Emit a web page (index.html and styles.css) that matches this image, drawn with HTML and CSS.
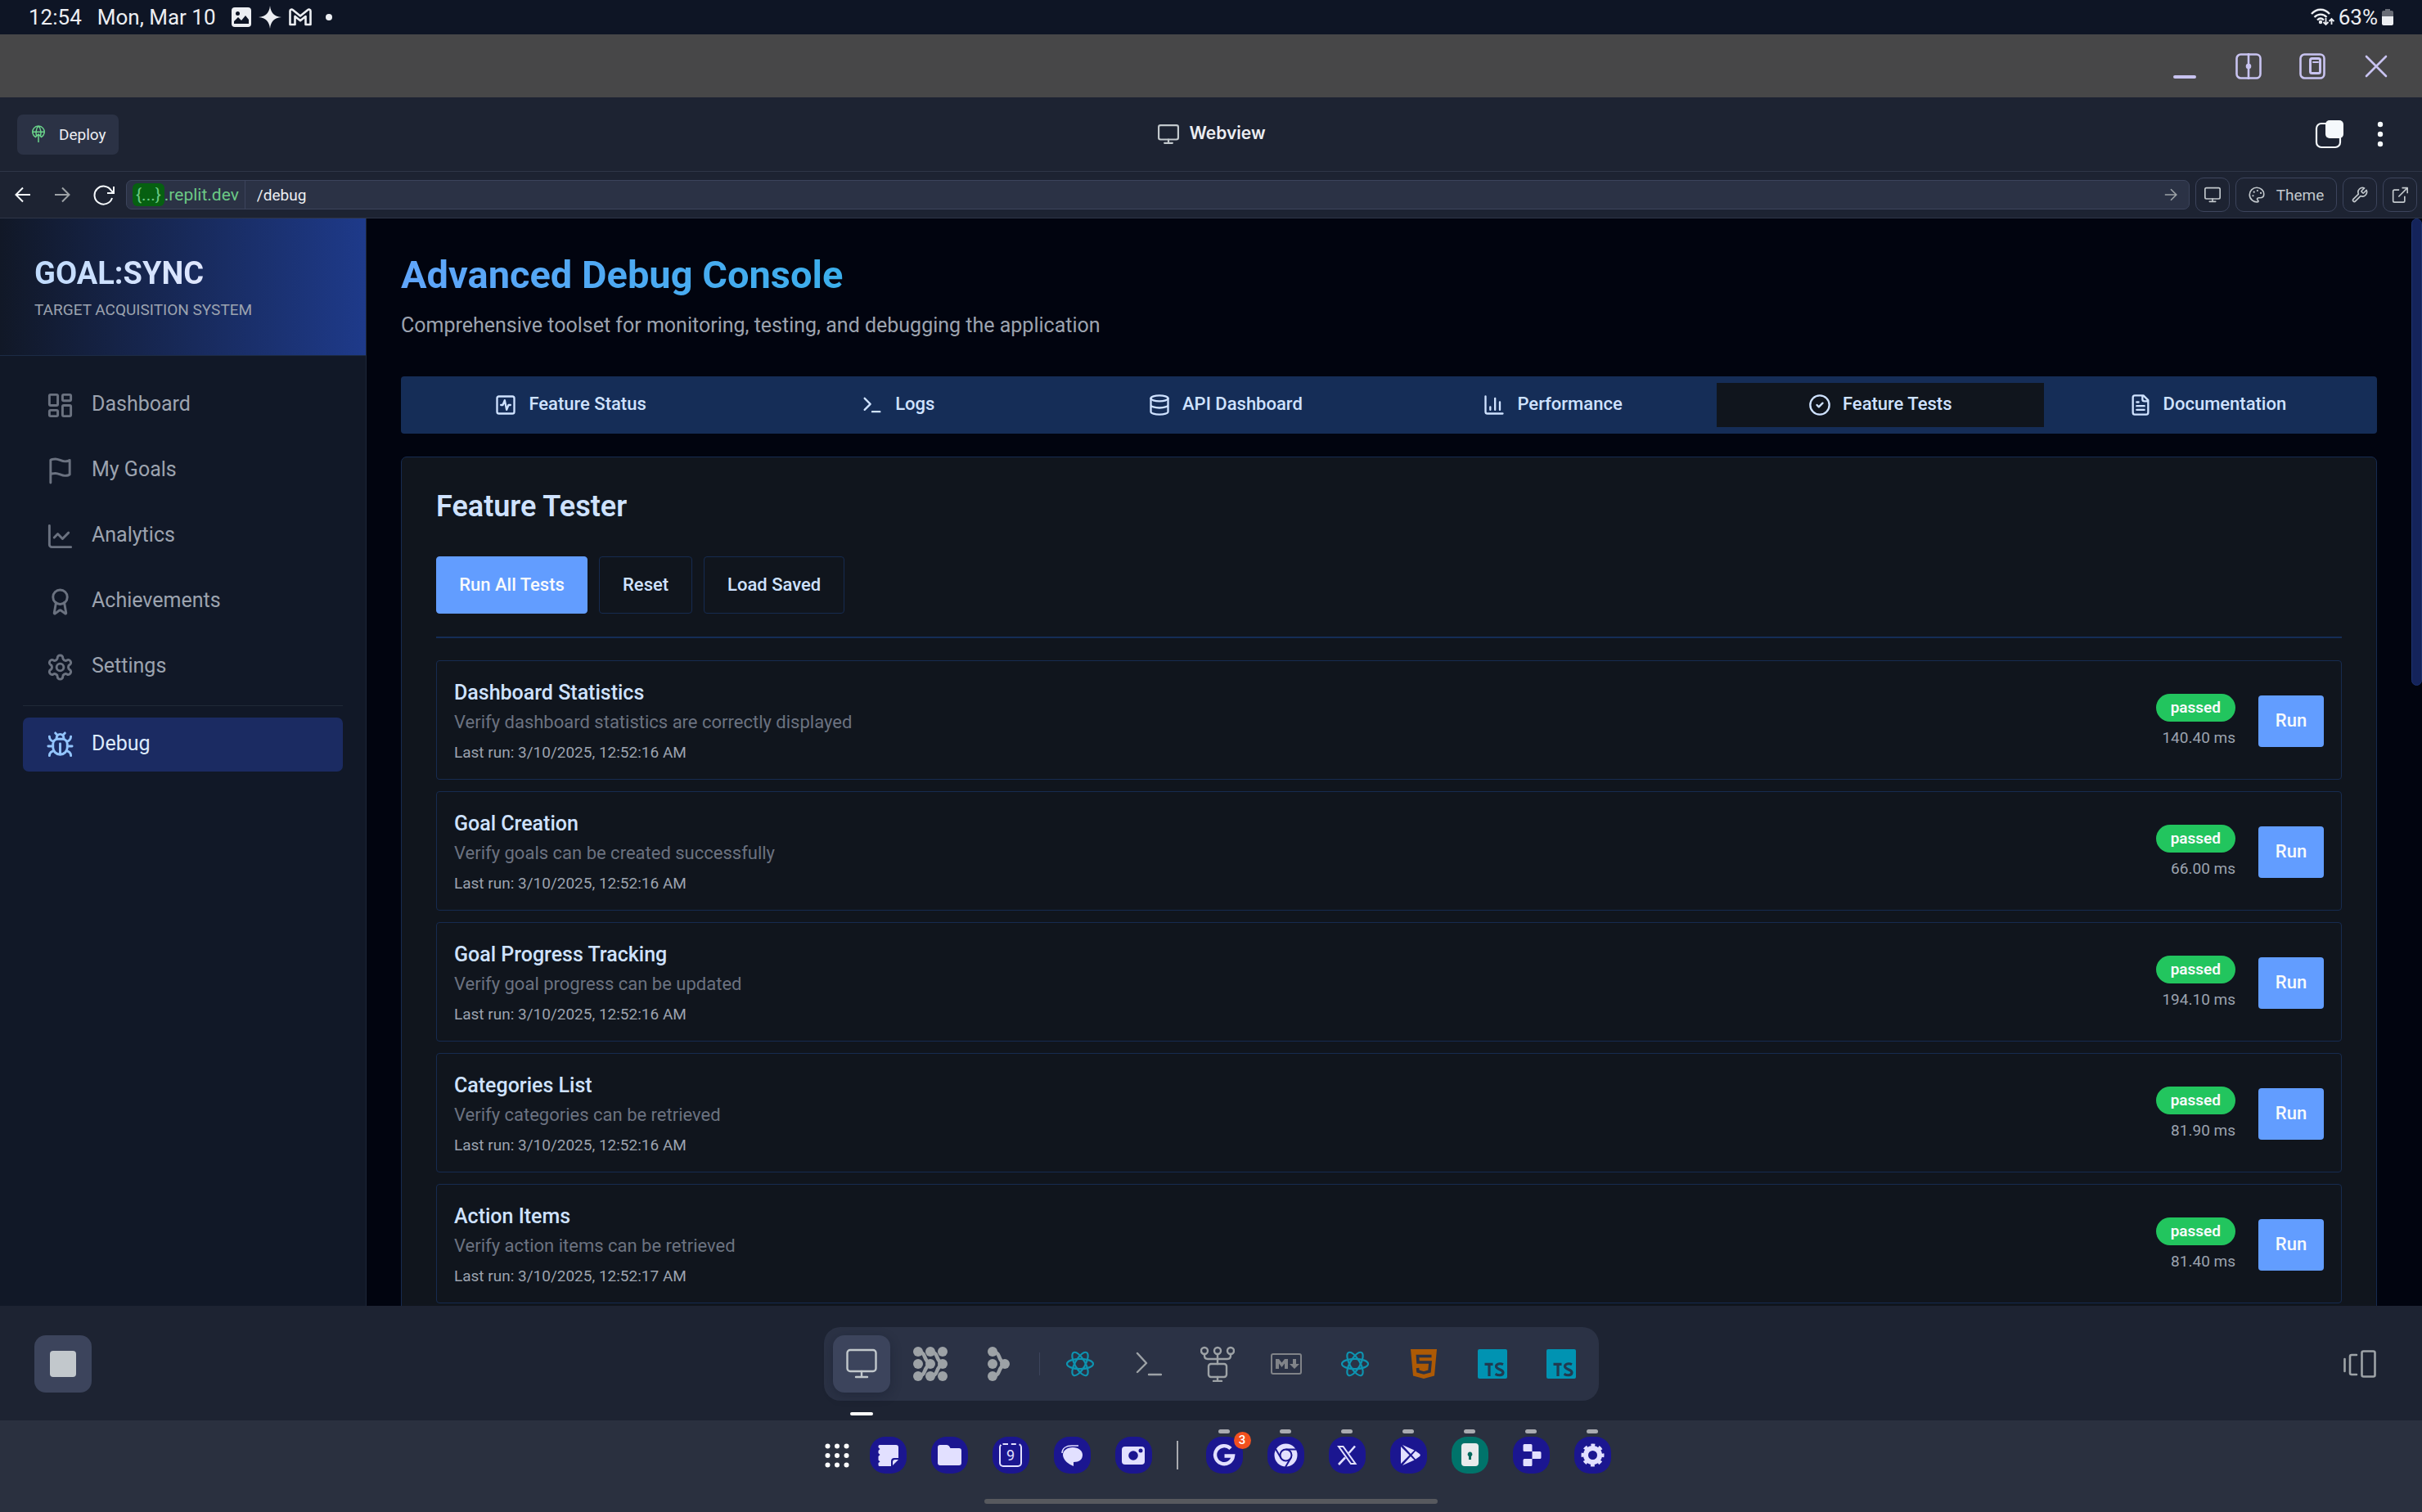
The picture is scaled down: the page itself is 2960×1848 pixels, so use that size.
FILE: index.html
```html
<!DOCTYPE html>
<html lang="en">
<head>
<meta charset="utf-8">
<title>Goal:Sync – Advanced Debug Console</title>
<link rel="stylesheet" href="styles.css">
</head>
<body>
<svg class="defs" aria-hidden="true">
  <symbol id="monitor" viewBox="0 0 24 24"><rect x="1" y="2" width="22" height="16" rx="2"/><path d="M12 18v4M7.500 22h9"/></symbol>
  <symbol id="react" viewBox="0 0 36 36"><ellipse cx="18" cy="18" rx="16" ry="6.200"/><ellipse cx="18" cy="18" rx="16" ry="6.200" transform="rotate(60 18 18)"/><ellipse cx="18" cy="18" rx="16" ry="6.200" transform="rotate(120 18 18)"/></symbol>
  <symbol id="ts" viewBox="0 0 36 36"><rect width="36" height="36" rx="2" fill="#0093b2"/><path d="M8.500 18.300h10M14 18.300V33" fill="none" stroke="#213a50" stroke-width="3.200"/><path d="M31 18.600c-3.500-1.600-8.500-1-8.500 2.500 0 4 8.500 3.200 8.500 7.400 0 3.800-5.500 4-9.500 1.800" fill="none" stroke="#213a50" stroke-width="3.200"/></symbol>
</svg>

<header class="status">
  <span>12:54</span>
  <span>Mon, Mar 10</span>
  <div class="status-icons">
    <svg width="24" height="24" viewBox="0 0 24 24"><rect y="0" width="24" height="24" rx="4" fill="#eceef2"/><circle cx="7.500" cy="7.500" r="2.500" fill="#0e1525"/><path d="M3 20v-3l5-5 4 4 5-6 4 5v5z" fill="#0e1525"/></svg>
    <svg width="28" height="28" viewBox="0 0 28 28"><path d="M14 0c1 9 5 13 14 14-9 1-13 5-14 14-1-9-5-13-14-14C9 13 13 9 14 0z" fill="#eceef2"/></svg>
    <svg width="28" height="22" viewBox="0 0 28 22"><path d="M1.500 20V3.500c0-2 2-2.500 3.500-1.300l9 7.300 9-7.300c1.500-1.200 3.500-.7 3.500 1.300V20h-6V10l-6.500 5.200L7.500 10v10z" fill="none" stroke="#eceef2" stroke-width="2.600" stroke-linejoin="round"/></svg>
    <svg width="8" height="8" viewBox="0 0 8 8"><circle cx="4" cy="4" r="4" fill="#eceef2"/></svg>
  </div>
  <div class="status-right">
    <svg width="29" height="22" viewBox="0 0 29 22" fill="none" stroke="#eceef2" stroke-width="2.400"><path d="M1 7c6-7 16-7 22 0M4.500 11c4.500-4.500 11-4.500 15 0M8 14.500c2.500-2.500 5.500-2.500 8 0"/><circle cx="12" cy="17" r="1"/><path d="M18.500 12v8m-3-3 3 3 3-3M25.500 20v-7m-3 3 3-3 3 3" stroke-width="1.800"/></svg>
    <span>63%</span>
    <svg width="14" height="20" viewBox="0 0 14 20"><path d="M4 0h6v2h2q2 0 2 2v5H0V4q0-2 2-2h2z" fill="#686c76"/><path d="M0 9h14v9q0 2-2 2H2q-2 0-2-2z" fill="#eceef2"/></svg>
  </div>
</header>

<div class="window-bar">
  <button aria-label="Minimize"><svg width="32" height="32" viewBox="0 0 32 32"><path d="M4 29h24" stroke-width="4"/></svg></button>
  <button aria-label="Split view"><svg width="32" height="32" viewBox="0 0 32 32"><rect x="1.500" y="1.500" width="29" height="29" rx="5"/><path d="M16 1v30"/><circle cx="16" cy="16" r="2" fill="#c8c3f0"/></svg></button>
  <button aria-label="Pop-up view"><svg width="32" height="32" viewBox="0 0 32 32"><rect x="1.500" y="1.500" width="29" height="29" rx="5"/><rect x="13.500" y="6.500" width="12" height="18" rx="2" stroke-width="3"/><path d="M17 11h6" stroke-width="2"/></svg></button>
  <button aria-label="Close"><svg width="32" height="32" viewBox="0 0 32 32"><path d="m4 4 24 24M28 4 4 28"/></svg></button>
</div>

<header class="app-bar">
  <div class="side"><button class="deploy"><svg width="16" height="22" viewBox="0 0 16 22"><path d="M4.500 14.500A7.200 7.200 0 1 1 11.500 14.500M1 8.200h14M8 1C4.500 4 4.500 11 6 14M8 1c3.500 3 3.500 10 2 13M8 21V11.500M4 15l4-4 4 4"/></svg>Deploy</button></div>
  <div class="view-title"><svg class="line" width="26" height="26"><use href="#monitor"/></svg><span>Webview</span></div>
  <div class="side end">
    <button aria-label="Tabs"><svg width="36" height="36" viewBox="0 0 36 36"><path d="M14 5H8a6 6 0 0 0-6 6v17a6 6 0 0 0 6 6h17a6 6 0 0 0 6-6V20" fill="none" stroke="#f5f9fc" stroke-width="2.200"/><rect x="13" y="1" width="22" height="22" rx="5" fill="#f5f9fc"/></svg></button>
    <button aria-label="More"><svg width="8" height="32" viewBox="0 0 8 32" fill="#f5f9fc"><circle cx="4" cy="4" r="3.200"/><circle cx="4" cy="16" r="3.200"/><circle cx="4" cy="28" r="3.200"/></svg></button>
  </div>
</header>

<nav class="url-bar">
  <button class="nav-btn" aria-label="Back"><svg width="20" height="20" viewBox="0 0 20 20"><path d="M19 10H1.500M10 1.500 1.500 10l8.500 8.500"/></svg></button>
  <button class="nav-btn dim" aria-label="Forward"><svg width="20" height="20" viewBox="0 0 20 20"><path d="M1 10h17.500M10 1.500l8.500 8.500-8.500 8.500"/></svg></button>
  <button class="nav-btn" aria-label="Reload"><svg width="26" height="26" viewBox="0 0 26 26"><path d="M23 17a11 11 0 1 1-1-9l3 3M25 3v8h-8"/></svg></button>
  <div class="address">
    <span class="host"><span class="tag">{...}</span>.replit.dev</span>
    <input aria-label="Path" value="/debug">
    <button class="dim" aria-label="Go"><svg width="16" height="16" viewBox="0 0 20 20"><path d="M1 10h17.500M10 1.500l8.500 8.500-8.500 8.500"/></svg></button>
  </div>
  <button class="tool" aria-label="Device"><svg class="line" width="20" height="20"><use href="#monitor"/></svg></button>
  <button class="tool wide"><svg width="20" height="20" viewBox="0 0 24 24"><path d="M14 22.500C8 23.500 1.500 19 1.500 12A10.500 10.500 0 0 1 12 1.500c6 0 10.500 4.500 10.500 9.500 0 4-3 5.500-5.500 5.500h-2c-2.500 0-3 2-1.500 3.500 1 1 1 2.300.5 2.500z"/><path d="M8 8h.1M13 6h.1M18 9.500h.1M6.500 13.500h.1" stroke-width="2.600" stroke-linecap="round"/></svg>Theme</button>
  <button class="tool" aria-label="Developer tools"><svg width="20" height="20" viewBox="0 0 24 24"><path d="M14.700 6.300a1 1 0 0 0 0 1.400l1.600 1.600a1 1 0 0 0 1.400 0l4-4a6.500 6.500 0 0 1-8.600 8.600l-7.600 7.600a2.100 2.100 0 0 1-3-3l7.600-7.600a6.500 6.500 0 0 1 8.600-8.600z"/></svg></button>
  <button class="tool" aria-label="Open in new tab"><svg width="20" height="20" viewBox="0 0 24 24"><path d="M11 5H4a2 2 0 0 0-2 2v14a2 2 0 0 0 2 2h13a2 2 0 0 0 2-2v-7M10 15 23 2M15 2h8v8"/></svg></button>
</nav>

<div class="page">
  <aside class="sidebar">
    <div class="brand">
      <h2>GOAL:SYNC</h2>
      <p>TARGET ACQUISITION SYSTEM</p>
    </div>
    <nav class="menu">
      <a href="#dashboard"><svg viewBox="0 0 24 24"><rect x="3" y="3" width="7" height="9" rx="1"/><rect x="14" y="3" width="7" height="5" rx="1"/><rect x="14" y="12" width="7" height="9" rx="1"/><rect x="3" y="16" width="7" height="5" rx="1"/></svg><span>Dashboard</span></a>
      <a href="#goals"><svg viewBox="0 0 24 24"><path d="M4 15s1-1 4-1 5 2 8 2 4-1 4-1V3s-1 1-4 1-5-2-8-2-4 1-4 1zM4 22v-7"/></svg><span>My Goals</span></a>
      <a href="#analytics"><svg viewBox="0 0 24 24"><path d="M3 3v16a2 2 0 0 0 2 2h16"/><path d="m19 9-5 5-4-4-3 3"/></svg><span>Analytics</span></a>
      <a href="#achievements"><svg viewBox="0 0 24 24"><path d="m15.477 12.890 1.515 8.526a.5.5 0 0 1-.81.47l-3.580-2.687a1 1 0 0 0-1.197 0l-3.586 2.686a.5.5 0 0 1-.81-.469l1.514-8.526"/><circle cx="12" cy="8" r="6"/></svg><span>Achievements</span></a>
      <a href="#settings"><svg viewBox="0 0 24 24"><path d="M12.220 2h-.44a2 2 0 0 0-2 2v.18a2 2 0 0 1-1 1.730l-.43.25a2 2 0 0 1-2 0l-.15-.08a2 2 0 0 0-2.730.73l-.22.38a2 2 0 0 0 .73 2.730l.15.1a2 2 0 0 1 1 1.720v.51a2 2 0 0 1-1 1.740l-.15.090a2 2 0 0 0-.73 2.730l.22.38a2 2 0 0 0 2.730.73l.15-.08a2 2 0 0 1 2 0l.43.25a2 2 0 0 1 1 1.730V20a2 2 0 0 0 2 2h.44a2 2 0 0 0 2-2v-.18a2 2 0 0 1 1-1.730l.43-.25a2 2 0 0 1 2 0l.15.08a2 2 0 0 0 2.730-.73l.22-.39a2 2 0 0 0-.73-2.730l-.15-.08a2 2 0 0 1-1-1.740v-.5a2 2 0 0 1 1-1.740l.15-.09a2 2 0 0 0 .73-2.730l-.22-.38a2 2 0 0 0-2.730-.73l-.15.080a2 2 0 0 1-2 0l-.43-.25a2 2 0 0 1-1-1.730V4a2 2 0 0 0-2-2z"/><circle cx="12" cy="12" r="3"/></svg><span>Settings</span></a>
      <hr>
      <a class="active" href="#debug"><svg viewBox="0 0 24 24"><path d="m8 2 1.880 1.880M14.120 3.880 16 2M9 7.130v-1a3.003 3.003 0 1 1 6 0v1M12 20c-3.300 0-6-2.700-6-6v-3a4 4 0 0 1 4-4h4a4 4 0 0 1 4 4v3c0 3.300-2.700 6-6 6M12 20v-9M6.530 9C4.600 8.800 3 7.100 3 5M6 13H2M3 21c0-2.100 1.700-3.900 3.800-4M20.970 5c0 2.100-1.600 3.800-3.500 4M22 13h-4M17.200 17c2.100.1 3.800 1.900 3.800 4"/></svg><span>Debug</span></a>
    </nav>
  </aside>

  <main>
    <h1>Advanced Debug Console</h1>
    <p class="lead">Comprehensive toolset for monitoring, testing, and debugging the application</p>
    <div class="tabs" role="tablist">
      <button role="tab"><svg viewBox="0 0 24 24"><rect x="3" y="3" width="18" height="18" rx="2"/><path d="M17 12h-2l-2 5-2-10-2 5H7"/></svg><span>Feature Status</span></button>
      <button role="tab"><svg viewBox="0 0 24 24"><path d="m4 17 6-6-6-6M12 19h8"/></svg><span>Logs</span></button>
      <button role="tab"><svg viewBox="0 0 24 24"><ellipse cx="12" cy="5" rx="9" ry="3"/><path d="M3 5v14a9 3 0 0 0 18 0V5M3 12a9 3 0 0 0 18 0"/></svg><span>API Dashboard</span></button>
      <button role="tab"><svg viewBox="0 0 24 24"><path d="M3 3v16a2 2 0 0 0 2 2h16M18 17V9M13 17V5M8 17v-3"/></svg><span>Performance</span></button>
      <button role="tab" class="selected" aria-selected="true"><svg viewBox="0 0 24 24"><circle cx="12" cy="12" r="10"/><path d="m9 12 2 2 4-4"/></svg><span>Feature Tests</span></button>
      <button role="tab"><svg viewBox="0 0 24 24"><path d="M15 2H6a2 2 0 0 0-2 2v16a2 2 0 0 0 2 2h12a2 2 0 0 0 2-2V7zM14 2v4a2 2 0 0 0 2 2h4M10 9H8M16 13H8M16 17H8"/></svg><span>Documentation</span></button>
    </div>

    <section class="card">
      <h2>Feature Tester</h2>
      <div class="actions">
        <button class="primary">Run All Tests</button>
        <button>Reset</button>
        <button>Load Saved</button>
      </div>
      <ul class="tests">
        <li><div class="info"><h3>Dashboard Statistics</h3><p>Verify dashboard statistics are correctly displayed</p><small>Last run: 3/10/2025, 12:52:16 AM</small></div><div class="result"><span class="badge">passed</span><small>140.40 ms</small></div><button class="primary run">Run</button></li>
        <li><div class="info"><h3>Goal Creation</h3><p>Verify goals can be created successfully</p><small>Last run: 3/10/2025, 12:52:16 AM</small></div><div class="result"><span class="badge">passed</span><small>66.00 ms</small></div><button class="primary run">Run</button></li>
        <li><div class="info"><h3>Goal Progress Tracking</h3><p>Verify goal progress can be updated</p><small>Last run: 3/10/2025, 12:52:16 AM</small></div><div class="result"><span class="badge">passed</span><small>194.10 ms</small></div><button class="primary run">Run</button></li>
        <li><div class="info"><h3>Categories List</h3><p>Verify categories can be retrieved</p><small>Last run: 3/10/2025, 12:52:16 AM</small></div><div class="result"><span class="badge">passed</span><small>81.90 ms</small></div><button class="primary run">Run</button></li>
        <li><div class="info"><h3>Action Items</h3><p>Verify action items can be retrieved</p><small>Last run: 3/10/2025, 12:52:17 AM</small></div><div class="result"><span class="badge">passed</span><small>81.40 ms</small></div><button class="primary run">Run</button></li>
      </ul>
    </section>
  </main>
  <div class="scroll"><div class="thumb"></div></div>
</div>

<footer class="dock">
  <div class="side"><button class="stop" aria-label="Stop"><svg width="32" height="32" viewBox="0 0 32 32"><rect width="32" height="32" rx="4" fill="#c2c8cc"/></svg></button></div>
  <div class="tools">
    <button class="current" aria-label="Webview"><svg class="line" width="38" height="38" viewBox="0 0 38 38"><rect x="1.500" y="2" width="35" height="26" rx="3.500"/><path d="M19 28v6M12 35h14"/></svg></button>
    <button aria-label="Agent"><svg width="42" height="44" viewBox="0 0 42 44" fill="#9da2a6" stroke="#9da2a6"><g stroke="none"><circle cx="6" cy="7" r="6"/><circle cx="21" cy="7" r="6"/><circle cx="36" cy="7" r="6"/><circle cx="6" cy="22" r="6"/><circle cx="21" cy="22" r="6"/><circle cx="36" cy="22" r="6"/><circle cx="6" cy="37" r="6"/><circle cx="21" cy="37" r="6"/><circle cx="36" cy="37" r="6"/></g><path d="M6 7q6 0 8 6t7 9q-5 3-7 9t-8 6M21 7q6 0 8 6t7 9q-5 3-7 9t-8 6" fill="none" stroke-width="4.500"/></svg></button>
    <button aria-label="Assistant"><svg width="28" height="44" viewBox="0 0 28 44" fill="#9da2a6"><circle cx="6" cy="7" r="6"/><circle cx="6" cy="22" r="6"/><circle cx="21" cy="22" r="6"/><circle cx="6" cy="37" r="6"/><path d="M6 7q6 0 8 6t7 9q-5 3-7 9t-8 6" fill="none" stroke="#9da2a6" stroke-width="4.500"/></svg></button>
    <i class="sep"></i>
    <button class="teal" aria-label="React file"><svg width="36" height="36"><use href="#react"/></svg></button>
    <button aria-label="Shell"><svg class="line" width="32" height="32" viewBox="0 0 32 32"><path d="m2 3 11 12L2 26M16 29h15"/></svg></button>
    <button aria-label="Workflows"><svg class="line" width="42" height="44" viewBox="0 0 42 44"><circle cx="5" cy="6" r="4"/><circle cx="21" cy="6" r="4"/><circle cx="37" cy="6" r="4"/><path d="M5 10v2q0 4 4 4h24q4 0 4-4v-2M21 10v12M21 38v4M16 43h10"/><rect x="10" y="22" width="22" height="16" rx="3"/></svg></button>
    <button aria-label="Markdown file"><svg width="38" height="26" viewBox="0 0 38 26"><rect x="1" y="1" width="36" height="24" rx="2" fill="none" stroke="#808388" stroke-width="2"/><path d="M6 19V7h4l3.500 4.500L17 7h4v12h-4v-6.500L13.500 17 10 12.500V19zM27 7h4v6h4l-6 6-6-6h4z" fill="#808388"/></svg></button>
    <button class="teal" aria-label="React file"><svg width="36" height="36"><use href="#react"/></svg></button>
    <button aria-label="HTML file"><svg width="32" height="36" viewBox="0 0 32 36"><path d="M0 0h32l-3 32.500L16 36 3 32.500z" fill="#ad5a05"/><path d="M25.500 8.500H8.500L9 16h15l-1 11-7 2-7-2-.5-4" fill="none" stroke="#2b3245" stroke-width="3.600"/></svg></button>
    <button aria-label="TypeScript file"><svg width="36" height="36"><use href="#ts"/></svg></button>
    <button aria-label="TypeScript file"><svg width="36" height="36"><use href="#ts"/></svg></button>
  </div>
  <div class="side end"><button class="switcher" aria-label="Switch pane"><svg width="40" height="34" viewBox="0 0 40 34" fill="none" stroke="#9da2a6" stroke-width="2.600" stroke-linecap="round"><path d="M1.500 11v15M16 6h-6q-2 0-2 2v20q0 2 2 2h6"/><rect x="22.500" y="1.500" width="16" height="31" rx="2"/></svg></button></div>
</footer>

<footer class="taskbar">
  <div class="apps">
    <button class="launcher" aria-label="All apps"><svg width="30" height="30" viewBox="0 0 30 30" fill="#fff"><circle cx="3.500" cy="3.500" r="3"/><circle cx="15" cy="3.500" r="3"/><circle cx="26.500" cy="3.500" r="3"/><circle cx="3.500" cy="15" r="3"/><circle cx="15" cy="15" r="3"/><circle cx="26.500" cy="15" r="3"/><circle cx="3.500" cy="26.500" r="3"/><circle cx="15" cy="26.500" r="3"/><circle cx="26.500" cy="26.500" r="3"/></svg></button>
    <button class="app" aria-label="Notes"><svg viewBox="0 0 45 45"><path d="M12 10h20q3 0 3 3v13h-5q-4 0-4 4v6H12q-1.500 0-1.500-1.500V32l2-1.500-2-2V24l2-2-2-2v-3l2-2-2-2v-1.500Q10.500 10 12 10z"/><path d="M28 35v-4q0-3 3-3h4z"/></svg></button>
    <button class="app" aria-label="Files"><svg viewBox="0 0 45 45"><path d="M11 10h8q2 0 3 1.500l1.500 2.500H34q3 0 3 3v15q0 3-3 3H11q-3 0-3-3V13q0-3 3-3z"/></svg></button>
    <button class="app" aria-label="Calendar"><span class="calendar">9</span></button>
    <button class="app" aria-label="Messages"><svg viewBox="0 0 45 45"><path d="M23 13c7 0 12 4 12 9 0 6-4 9-11 9v5c-5-2-13-7-13-14 0-5 5-9 12-9z"/><path d="M10 20c0-6 5-9 12-9h8" fill="none" stroke="#e2e0ff" stroke-width="1.500"/></svg></button>
    <button class="app" aria-label="Camera"><svg viewBox="0 0 45 45"><rect x="8" y="12" width="28" height="22" rx="4"/><g fill="#1b1690"><circle cx="22" cy="23" r="5.800"/><circle cx="31" cy="17" r="2.500"/></g></svg></button>
    <i class="sep"></i>
    <button class="app open" aria-label="Google"><svg viewBox="0 0 45 45"><path d="M30 14.500A11 11 0 1 0 33 23.500H22.500" fill="none" stroke="#e2e0ff" stroke-width="4.400"/></svg><b class="count">3</b></button>
    <button class="app open" aria-label="Chrome"><svg viewBox="0 0 45 45"><circle cx="22.500" cy="22.500" r="14"/><g fill="none" stroke="#1b1690" stroke-width="2"><circle cx="22.500" cy="22.500" r="7"/><path d="M22.500 15.500h12.500M16.500 26 10 15M28.500 26l-6.500 11"/></g></svg></button>
    <button class="app open" aria-label="X"><svg viewBox="0 0 45 45"><path d="M12 12h5.500l15 21H27z" fill="none" stroke="#e2e0ff" stroke-width="2"/><path d="M32 11.500 24.500 20M20 25.500 12 34" fill="none" stroke="#e2e0ff" stroke-width="2.600"/></svg></button>
    <button class="app open" aria-label="Play Store"><svg viewBox="0 0 45 45"><path d="M13 12v21l10.500-10.500zM15 10l10 11 4.500-4.500zM15 35l10-11 4.500 4.500zM31 17.500l5 3.500q1.500 1.500 0 3L31 27.500l-4.500-5z"/></svg></button>
    <button class="app open green" aria-label="Authenticator"><svg viewBox="0 0 45 45"><rect x="12" y="8" width="21" height="28" rx="4" fill="#e9ebec"/><path d="M22.500 18.500a3 3 0 0 1 1.500 5.500v4h-3v-4a3 3 0 0 1 1.500-5.500z" fill="#00695c"/></svg></button>
    <button class="app open" aria-label="Replit"><svg viewBox="0 0 45 45"><path d="M14 9h8q1.500 0 1.500 1.500V18H14q-1.500 0-1.500-1.500v-6Q12.500 9 14 9zM23.500 18H33q1.500 0 1.500 1.500v6Q34.500 27 33 27h-9.500zM14 27h9.500v7.500Q23.500 36 22 36h-8q-1.500 0-1.500-1.500v-6q0-1.500 1.500-1.500z"/></svg></button>
    <button class="app open" aria-label="Settings"><svg viewBox="0 0 45 45"><circle cx="22.500" cy="22.500" r="8.500" fill="none" stroke="#e2e0ff" stroke-width="6"/><circle cx="22.500" cy="22.500" r="12" fill="none" stroke="#e2e0ff" stroke-width="4" stroke-dasharray="4.710" stroke-dashoffset="2.360"/></svg></button>
  </div>
  <div class="handle"></div>
</footer>
</body>
</html>
```
FILE: styles.css
```css
* { box-sizing: border-box; margin: 0; padding: 0; }

body {
  height: 100vh;
  overflow: hidden;
  display: flex;
  flex-direction: column;
  background: #1d2332;
  color: #eceef2;
  font-family: Roboto, "Liberation Sans", sans-serif;
  font-size: 25px;
}

button, input { font: inherit; color: inherit; background: none; border: 0; }
button { display: flex; align-items: center; justify-content: center; }
svg { flex: none; display: block; }
a { color: inherit; text-decoration: none; }
ul { list-style: none; }
.defs { position: absolute; width: 0; height: 0; }
.line { fill: none; stroke: #c2c8cc; stroke-width: 2; stroke-linecap: round; stroke-linejoin: round; }

/* Tablet status bar */
.status {
  flex: none;
  height: 42px;
  padding: 0 35px 0 35px;
  display: flex;
  align-items: center;
  gap: 19px;
  background: #0e1525;
  font-size: 26px;
}
.status-icons { display: flex; align-items: center; gap: 9px; }
.status-icons svg:last-child { margin-left: 8px; }
.status-right { margin-left: auto; display: flex; align-items: center; gap: 5px; }

/* Floating window controls */
.window-bar {
  flex: none;
  height: 77px;
  padding: 0 40px;
  display: flex;
  align-items: center;
  justify-content: flex-end;
  gap: 46px;
  background: #474748;
}
.window-bar svg { fill: none; stroke: #c8c3f0; stroke-width: 2.600; stroke-linecap: round; }

/* Workspace header */
.app-bar {
  flex: none;
  height: 91px;
  padding: 0 47px 0 21px;
  display: flex;
  align-items: center;
  border-bottom: 1px solid #2e3547;
}
.side { flex: 1; display: flex; align-items: center; }
.end { justify-content: flex-end; gap: 40px; }
.deploy {
  height: 49px;
  padding: 0 15px 0 18px;
  gap: 17px;
  border-radius: 7px;
  background: #2b3245;
  font-size: 19px;
}
.deploy svg { fill: none; stroke: #6bd48b; stroke-width: 1.500; }
.view-title {
  display: flex;
  align-items: center;
  gap: 12px;
  padding-left: 28px;
  font: 600 21px "Inter", Roboto, sans-serif;
}

/* Address row */
.url-bar {
  flex: none;
  height: 57px;
  padding: 0 6px 0 18px;
  display: flex;
  align-items: center;
  gap: 7px;
  border-bottom: 1px solid #2e3547;
  font-size: 21px;
}
.url-bar svg { fill: none; stroke: #f5f9fc; stroke-width: 2; }
.nav-btn { margin-right: 21px; }
.nav-btn + .nav-btn + .nav-btn { margin-right: 7px; }
.url-bar .dim svg { stroke: #9da2a6; }
.url-bar .tool svg { stroke: #c2c8cc; stroke-linejoin: round; }
.address {
  flex: 1;
  height: 36px;
  padding: 0 14px 0 7px;
  display: flex;
  align-items: stretch;
  border: 1px solid #3c445c;
  border-radius: 7px;
  background: #2b3245;
}
.host {
  display: flex;
  align-items: center;
  padding-right: 7px;
  border-right: 1px solid #3c445c;
  color: #6bc985;
}
.tag { height: 28px; padding: 0 4px; line-height: 28px; border-radius: 6px; background: #066011; }
.address input { flex: 1; padding-left: 14px; font-size: 19px; }
.tool {
  width: 42px;
  height: 42px;
  border: 1px solid #3c445c;
  border-radius: 10px;
  font-size: 19px;
  color: #c2c8cc;
}
.tool.wide { width: 124px; gap: 14px; }

/* Page */
.page { flex: 1; min-height: 0; display: flex; background: #01040f; overflow: hidden; }
.sidebar { flex: none; width: 448px; border-right: 1px solid #1c2637; background: #111827; }
.brand {
  padding: 43px 42px 41px;
  border-bottom: 1px solid #1c2b45;
  background: linear-gradient(90deg, #111827, #1e3a8a);
}
.brand h2 {
  width: max-content;
  line-height: 48px;
  font-size: 38px;
  background: linear-gradient(90deg, #bfdbfe, #e0e7ff);
  background-clip: text;
  color: transparent;
}
.brand p { margin-top: 7px; line-height: 28px; font-size: 19px; color: #9ca3af; }
.menu { padding: 27px 28px; display: flex; flex-direction: column; gap: 14px; }
.menu a {
  height: 66px;
  padding: 0 28px;
  display: flex;
  align-items: center;
  gap: 21px;
  border-radius: 7px;
  color: #9ca3af;
}
.menu svg { width: 35px; height: 35px; stroke: #6b7280; }
.menu svg, .tabs svg { fill: none; stroke-width: 2; stroke-linecap: round; stroke-linejoin: round; }
.menu span, .tabs span, .view-title span { padding-bottom: 3px; }
.menu hr { border: 0; border-top: 1px solid #1f2937; }
.menu .active { background: #1b2b62; color: #dbeafe; }
.menu .active svg { stroke: #93c5fd; }

main { flex: 1; min-width: 0; padding: 43px 42px 42px; }
h1 {
  line-height: 52px;
  font-size: 47px;
  background: linear-gradient(90deg, #60a5fa, #15b8dd 45%, #22d3ee);
  background-clip: text;
  color: transparent;
}
.lead { margin: 18px 0 44px; line-height: 36px; color: #9ca3af; }

.tabs {
  height: 70px;
  padding: 8px 7px;
  display: grid;
  grid-template-columns: repeat(6, 1fr);
  border-radius: 4px;
  background: #152d57;
}
.tabs button { gap: 14px; font-size: 22px; font-weight: 500; color: #cfe2ff; }
.tabs svg { width: 28px; height: 28px; stroke: #cfe2ff; }
.tabs .selected { background: #10151d; }

.card {
  margin-top: 28px;
  padding: 42px;
  border: 1px solid #162b50;
  border-radius: 7px;
  background: #10151d;
  color: #cfe2ff;
}
.card h2 { line-height: 36px; font-size: 36px; font-weight: 600; }
.card button { padding-bottom: 2px; }
.actions {
  margin-top: 43px;
  padding-bottom: 28px;
  display: flex;
  gap: 14px;
  border-bottom: 2px solid #152d57;
}
.actions button {
  height: 70px;
  padding: 0 28px 2px;
  border: 1px solid #162b50;
  border-radius: 4px;
  font-size: 22px;
  font-weight: 500;
}
.card .primary { padding: 0 0 2px; background: #629dff; border-color: #629dff; color: #f8fafc; }
.actions .primary { width: 185px; }
.tests { margin-top: 27px; display: flex; flex-direction: column; gap: 14px; }
.tests li {
  padding: 21px 21px 18px;
  display: flex;
  align-items: center;
  border: 1px solid #162b50;
  border-radius: 4px;
}
.info { flex: 1; }
.tests h3 { line-height: 36px; font-size: 25px; font-weight: 500; }
.tests p { line-height: 36px; font-size: 22px; color: #6b7280; }
.tests small { display: block; font-size: 19px; color: #9ca3af; }
.info small { margin-top: 5px; line-height: 28px; }
.result { display: flex; flex-direction: column; align-items: flex-end; gap: 7px; }
.result small { line-height: 26px; }
.badge {
  height: 34px;
  padding: 0 18px;
  line-height: 34px;
  border-radius: 17px;
  background: #22c55e;
  color: #f8fafc;
  font-size: 19px;
  font-weight: 600;
}
.run { margin-left: 28px; width: 80px; height: 63px; border-radius: 4px; font-size: 22px; font-weight: 500; }

.scroll { flex: none; width: 13px; }
.thumb { height: 43%; border: 1px solid #1d3270; border-radius: 7px; background: #14235a; }

/* Workspace tool dock */
.dock { flex: none; height: 140px; padding: 1px 42px 0; display: flex; align-items: center; }
.stop { width: 70px; height: 70px; border-radius: 14px; background: #3c445c; }
.switcher { width: 68px; height: 68px; }
.tools {
  display: flex;
  align-items: center;
  gap: 14px;
  padding: 10px 11px;
  border-radius: 20px;
  background: #2b3245;
}
.tools button { width: 70px; height: 70px; }
.tools .line { stroke: #9da2a6; stroke-width: 2.400; }
.tools .teal svg { fill: none; stroke: #0e93b0; stroke-width: 2.200; }
.tools .sep { width: 1px; height: 28px; background: #3c445c; }
.tools .current {
  position: relative;
  border-radius: 14px;
  background: #3c445c;
  box-shadow: 0 4px 14px rgba(14, 21, 37, .3);
}
.tools .current .line { stroke: #c2c8cc; }
.current::after {
  content: "";
  position: absolute;
  bottom: -28px;
  width: 28px;
  height: 4px;
  border-radius: 2px;
  background: #fff;
}

/* Android taskbar */
.taskbar {
  flex: none;
  height: 112px;
  padding: 20px 0 10px;
  display: flex;
  flex-direction: column;
  align-items: center;
  justify-content: space-between;
  background: #2a303f;
}
.apps { display: flex; align-items: center; gap: 30px; padding-left: 16px; }
.launcher { margin-right: -5px; }
.app { position: relative; width: 45px; height: 45px; border-radius: 19px; background: #1b1690; }
.app svg { width: 45px; height: 45px; fill: #e2e0ff; }
.app.green { background: #00736a; }
.open::before {
  content: "";
  position: absolute;
  top: -9px;
  width: 14px;
  height: 5px;
  border-radius: 3px;
  background: #a9abb0;
}
.apps .sep { width: 2px; height: 35px; margin-right: 4px; background: #a9abb0; }
.count {
  position: absolute;
  top: -6px;
  right: -10px;
  width: 21px;
  height: 21px;
  border-radius: 50%;
  background: #f2501e;
  font-size: 15px;
  font-weight: 500;
  line-height: 21px;
  color: #fff;
}
.calendar {
  width: 28px;
  height: 29px;
  border: 2px solid #e2e0ff;
  border-top-style: dashed;
  border-radius: 5px;
  font-size: 18px;
  line-height: 26px;
  color: #e2e0ff;
}
.handle { width: 554px; height: 6px; border-radius: 3px; background: #57595e; }
```
